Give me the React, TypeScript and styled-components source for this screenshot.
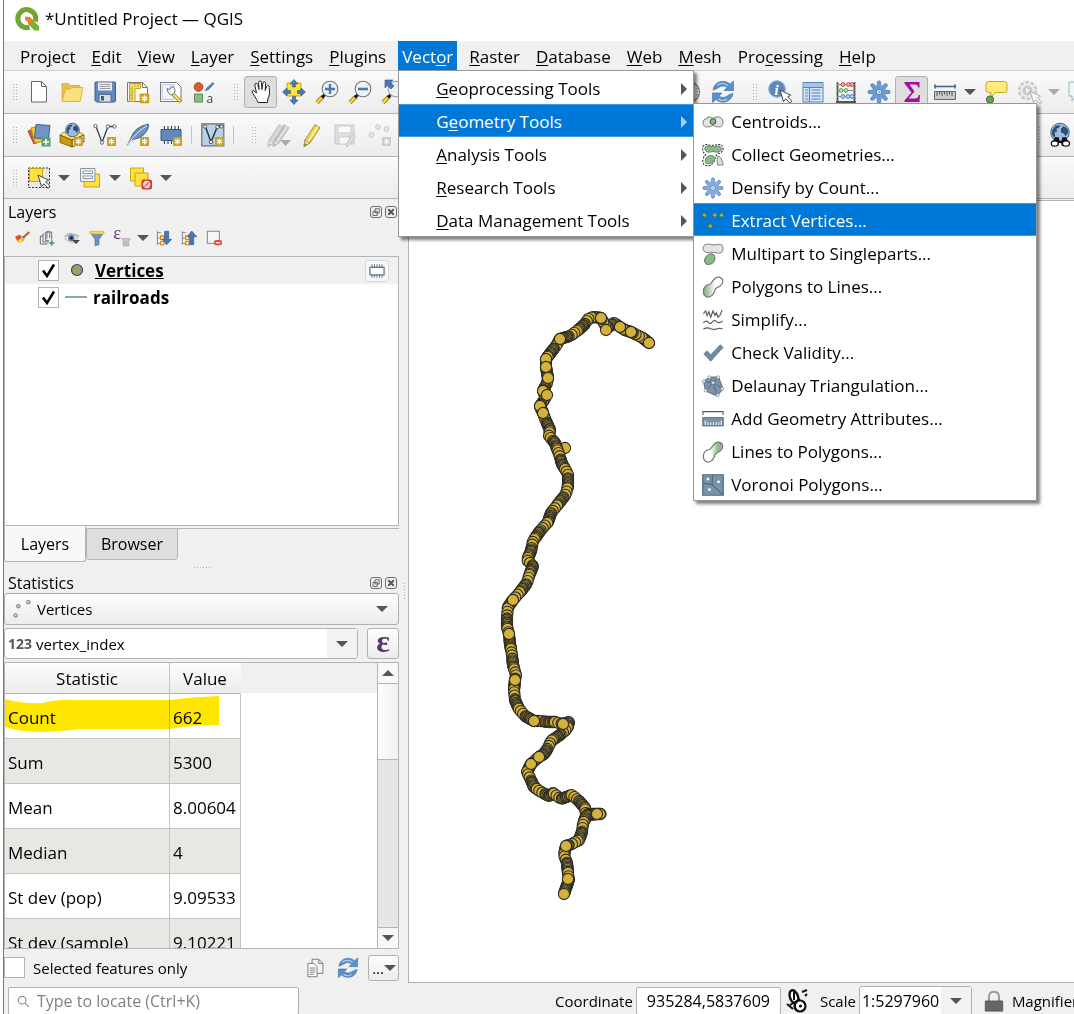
import React from 'react';
import styled, { createGlobalStyle, css } from 'styled-components';

const font = '"Open Sans", "Noto Sans", sans-serif';

const GlobalStyle = createGlobalStyle`
  *, *::before, *::after { box-sizing: border-box; }
  body { margin: 0; background: #fff; overflow: hidden; }
  button, input, select { font: inherit; color: inherit; margin: 0; }
  svg { display: block; flex: none; overflow: visible; }
`;

/* ---------- icons ---------- */

const Badge = ({ fill = '#c9a21a' }: { fill?: string }) => (
  <g>
    <rect x="14" y="14" width="9" height="9" rx="1" fill={fill} />
    <path d="M18.500 15.500v6M15.900 17l5.200 3M15.900 20l5.200-3" stroke="#fff" strokeWidth="1.200" />
  </g>
);

const Gear = ({ fill, stroke }: { fill: string; stroke: string }) => (
  <g>
    {[0, 45, 90, 135, 180, 225, 270, 315].map((a) => (
      <path key={a} d="M10 7L10.600 1.500Q12 .3 13.400 1.500L14 7z" fill={fill} stroke={stroke} strokeWidth=".8" transform={`rotate(${a} 12 12)`} />
    ))}
    <circle cx="12" cy="12" r="6.500" fill={fill} />
    <circle cx="12" cy="12" r="2.600" fill="#fff" stroke={stroke} />
    <circle cx="12" cy="12" r="1" fill={fill} />
  </g>
);

const Pencil = ({ body, dark, tip }: { body: string; dark: string; tip: string }) => (
  <g>
    <path d="M5 17L15 1.500l5 3.200L10 20l-6 3.500z" fill={body} stroke={dark} strokeWidth=".8" />
    <path d="M8 18.500L18 3.500" stroke="#fff" strokeOpacity=".6" strokeWidth="1.500" />
    <path d="M5 17l5 3-6 3.500z" fill={tip} stroke={dark} strokeWidth=".6" />
    <path d="M4.600 20.500l2.300 1.300L4 23.500z" fill={dark} />
  </g>
);

const Cursor = ({ x, y, stroke = '#444' }: { x: number; y: number; stroke?: string }) => (
  <path transform={`translate(${x} ${y})`} d="M0 0l3.500 11.500 2.300-2.700 4.200 4.400 2-2-4.400-4.200 3-1.800z" fill="#fff" stroke={stroke} strokeWidth="1" />
);

const Lens = ({ children, ring = '#6f7680' }: { children?: React.ReactNode; ring?: string }) => (
  <g>
    <path d="M2 22.500l6-6" stroke="#8a6d10" strokeWidth="4" />
    <path d="M2 22.500l5.500-5.500" stroke="#f4d03a" strokeWidth="2.600" />
    <path d="M7 17.500l3-3" stroke="#111" strokeWidth="3" />
    <circle cx="15" cy="9" r="7.800" fill="#eef1f5" stroke={ring} strokeWidth="1.100" />
    {children}
  </g>
);

const Refresh = () => (
  <g fill="#5b8fc9" stroke="#3d6fa8" strokeWidth=".6">
    <path d="M2 10C3 4 8 .5 14 1.500q3 .5 5 2.500L22.500 1v9.500H13l3.200-3.200Q11 4.500 7 8q-2 1.500-5 2z" />
    <path d="M22 13.500c-1 6-6 9.500-12 8.500q-3-.5-5-2.500L1.500 22.500V13H11l-3.200 3.200Q13 19 17 15.500q2-1.500 5-2z" />
    <path d="M6 5.500q5-4 11 0M7 19q5 3 9 0" stroke="#b8d3ee" fill="none" strokeWidth="1.200" />
  </g>
);

const Globe = ({ cx, cy, r }: { cx: number; cy: number; r: number }) => (
  <g>
    <circle cx={cx} cy={cy} r={r} fill="#9dbbdc" stroke="#2d4a6b" strokeWidth=".8" />
    <path transform={`translate(${cx} ${cy}) scale(${r / 10})`} d="M-8-3l3-4 5-1-1 3-3 1 1 3-3 1 1 4-2 1-2-4zM1-4l3-3 4 3 1 4-3 4-2-3-3-1z" fill="#2d4f78" />
  </g>
);

const GREEN = '#8cba86';
const BLUE = '#7a93a8';

const drawings: Record<string, React.ReactNode> = {
  newFile: <path d="M4.500 1.500h10l5 5v15.500h-15zM14.500 1.500v5h5" fill="#fff" stroke="#666" />,
  open: (
    <g stroke="#d9a83c" strokeWidth=".8">
      <path d="M2 21V3.500h6.500l1.500 2h10V21z" fill="#eebb4d" />
      <path d="M2 21.500L5.500 9h5l1.500-1.500h11L20 21.500z" fill="#fbe07e" />
    </g>
  ),
  save: (
    <g>
      <path d="M2.500 2h19a1 1 0 011 1v18l-1 1h-18l-1.500-1.500V3q0-1 .5-1z" fill="#5f88bb" stroke="#3f5f88" />
      <path d="M5 2.500h14v8H5z" fill="#eee" />
      <path d="M6.500 4.500h11M6.500 6.500h11M6.500 8.500h11" stroke="#888" strokeWidth=".8" />
      <path d="M6 14.500h12V22H6z" fill="#ddd" stroke="#3f5f88" strokeWidth=".8" />
      <path d="M8 16h3v4.500H8z" fill="#3f5f88" />
    </g>
  ),
  layout: (
    <g>
      <path d="M1.500 2.500h15l5 5v14h-20z" fill="#fff" stroke="#777" />
      <path d="M16.500 2.500v5h5" fill="none" stroke="#777" />
      <path d="M3.500 3.500h11v5h-5.500v13H3.500z" fill="#f6dc72" stroke="#c9a21a" />
      <path d="M6 6v14M9 4v3M12 4v3M4 9h3M4 12h3M4 15h3M4 18h3" stroke="#c9a21a" strokeWidth=".8" />
      <g transform="translate(-1.500 -1.500) scale(1.080)"><Badge /></g>
    </g>
  ),
  styleEdit: (
    <g>
      <path d="M1.500 2.500h16l4.500 4.500v14.500H1.500z" fill="#fff" stroke="#777" />
      <path d="M3 4.500h12v15H3z" fill="#f2f5fb" stroke="#9db2d6" strokeWidth=".7" />
      <path d="M14 14l8 8" stroke="#a4811a" strokeWidth="3.800" />
      <path d="M14 14l7.500 7.500" stroke="#f4d75a" strokeWidth="2.400" />
      <path d="M8 8.500l3 1 1-3q4 0 4 4l-.5 2.500-2.500 2Q9 15 8 8.500z" fill="#f4f4f4" stroke="#666" strokeWidth=".9" />
    </g>
  ),
  styleManager: (
    <g>
      <circle cx="6.500" cy="7" r="4.300" fill="#cf6030" stroke="#a5431b" />
      <path d="M13.500 10.500q1-3 3-4l4.500-4 1 1-4 4.500q-1 2-4.500 2.500z" fill="#5f88bb" stroke="#3f5f88" strokeWidth=".7" />
      <path d="M2.500 14h8v8h-8z" fill={GREEN} stroke="#5d8f58" />
      <text x="14.500" y="22.500" fontSize="12" fill="#444" fontFamily={font}>a</text>
    </g>
  ),
  hand: (
    <path d="M9 22.500q-1-3-3.500-6.500L3 12q0-1.800 2-1.300l2.500 2.500L5.800 5q0-1.800 1.500-1.700 1.200 0 1.500 1.200l1.200 5-.4-7q.2-1.600 1.500-1.500 1.200 0 1.400 1.500l.4 7 1-6.500q.5-1.500 1.700-1.200 1.200.2 1.100 1.700l-.5 7 1.500-4q.8-1.400 1.800-1 1 .5.700 1.800L20.500 13q0 3-1.700 6l-.3 3.500z" fill="#fff" stroke="#222" strokeWidth="1" />
  ),
  panSelection: (
    <g>
      <path d="M5 3h14v13H5z" fill="#fbe23c" stroke="#cda31a" />
      <path d="M12-.5l4 4.500h-2.500v3h-3V4H8zM12 24.500l4-4.500h-2.500v-3.500h-3V20H8zM.5 12L5 8v2.500h3.500v3H5V16zM23.500 12L19 8v2.500h-3.500v3H19V16z" fill="#4a78b0" stroke="#2d5488" strokeWidth=".6" />
    </g>
  ),
  zoomIn: <Lens><path d="M15 4v10M10 9h10" stroke="#4a78b0" strokeWidth="2.400" /></Lens>,
  zoomOut: <Lens><path d="M10 9h10" stroke="#4a78b0" strokeWidth="2.600" /></Lens>,
  zoomFull: (
    <g>
      <Lens ring="#9aa0a8" />
      <path d="M4 0h8L9.500 2.500 13 6l-3 3-3.500-3.500L4 8z" fill="#4a78b0" stroke="#2d5488" strokeWidth=".6" />
    </g>
  ),
  clock: (
    <g>
      <circle cx="12" cy="12" r="9.500" fill="#eee" stroke="#777" strokeWidth="1.300" />
      <path d="M19 8v8" stroke="#5f88bb" strokeWidth="1.500" strokeDasharray="1.500 1.500" />
    </g>
  ),
  refresh: <Refresh />,
  identify: (
    <g>
      <circle cx="9" cy="9" r="8.300" fill="#5d8bc0" stroke="#8db2da" />
      <text x="6.500" y="14.500" fontSize="15" fontStyle="italic" fontWeight="700" fill="#fff" fontFamily="Liberation Serif, serif">i</text>
      <Cursor x={12} y={10} />
    </g>
  ),
  table: (
    <g>
      <path d="M2 2.500h20v19.500H2z" fill="#d5e3f4" stroke="#4f83c0" />
      <path d="M2.500 3h19v4h-19z" fill="#a7c4e6" />
      <path d="M2 7.500h20M8.500 7v15M4 10h3M4 13h3M4 16h3M4 19h3M10.500 10h9M10.500 13h9M10.500 16h9M10.500 19h9" stroke="#4f83c0" strokeWidth="1.100" />
    </g>
  ),
  abacus: (
    <g fill="none">
      <path d="M3.500 2v19M20.500 2v19M2 22h20" stroke="#555" strokeWidth="1.800" />
      <path d="M3 4.500h18M3 10.500h18M3 16.500h18" stroke="#888" />
      <g stroke="#c94040" fill="#f4b0b0"><circle cx="9" cy="4.500" r="1.900" /><circle cx="14.500" cy="4.500" r="1.900" /><circle cx="18" cy="4.500" r="1.900" /></g>
      <g stroke="#5aa050" fill="#bde0b8"><circle cx="7" cy="10.500" r="1.900" /><circle cx="12" cy="10.500" r="1.900" /></g>
      <g stroke="#4f83c0" fill="#bcd4f0"><circle cx="9" cy="16.500" r="1.900" /><circle cx="14" cy="16.500" r="1.900" /><circle cx="18" cy="16.500" r="1.900" /></g>
    </g>
  ),
  gear: <Gear fill="#6d9bd6" stroke="#4a78b0" />,
  densify: <Gear fill="#86abdc" stroke="#4f7fbe" />,
  sigma: <path d="M4.500 2h15v5.500h-1.300q-.5-3-3-3H9.500l5 7-6 7h6.500q3 0 3.700-3.500H20L19.500 22h-15v-1.500l7-8-7-9z" fill="#a3109f" />,
  ruler: (
    <g>
      <path d="M2 6.500h20M2 4.500v4M22 4.500v4" stroke="#3d5f8c" strokeWidth="1.600" />
      <path d="M1.500 11.500h21v8h-21z" fill="#ccc" stroke="#666" />
      <path d="M4 12v4M6.500 12v2.500M9 12v4M11.500 12v2.500M14 12v4M16.500 12v2.500M19 12v4" stroke="#555" />
    </g>
  ),
  mapTips: (
    <g>
      <path d="M4.500 1.500h16q2.500 0 2.500 2.500v6q0 2.500-2.500 2.500H11l-4.500 6 .5-6H4.500Q2 12.500 2 10V4q0-2.500 2.500-2.500z" fill="#fbec7c" stroke="#cda31a" />
      <circle cx="6" cy="19.500" r="3.600" fill="#64a35c" stroke="#3d6b38" />
    </g>
  ),
  action: (
    <g opacity=".4">
      <circle cx="10.500" cy="10.500" r="8.500" fill="#ddd" stroke="#888" strokeWidth="2.500" strokeDasharray="3.400 2" />
      <circle cx="10.500" cy="10.500" r="4.800" fill="#888" />
      <path d="M9 8l4 2.500L9 13z" fill="#fff" />
      <Cursor x={13} y={11} />
    </g>
  ),
  bubble: <path d="M1 2h22v14H8l-4 5v-5H1z" fill="#eef6f8" stroke="#9bb5bd" />,
  dataSource: (
    <g>
      <path d="M1 8l8-3 5 13-7 3z" fill="#cf6030" stroke="#a5431b" />
      <path d="M4 5l9-2 3 15-8 2z" fill="#f0cc3a" stroke="#b8921a" />
      <path d="M9 1.500l14 1-1.500 13.500-14-1z" fill="#6d95c8" stroke="#3f5f88" />
      <path d="M14.500 14.500h9v9h-9z" fill="#5a9f6c" /><path d="M19 16v6M16 19h6" stroke="#fff" strokeWidth="1.600" />
    </g>
  ),
  geopackage: (
    <g>
      <path d="M0 12l4-3 8 4 7-4 5 3-12 5z" fill="#fbe576" stroke="#5c470a" strokeWidth=".6" />
      <Globe cx={12.500} cy={7} r={6.800} />
      <path d="M12 17l12-5v7l-12 5z" fill="#f9df4a" stroke="#5c470a" strokeWidth=".8" />
      <path d="M12 17v7L0 19.500V12z" fill="#c79a11" stroke="#5c470a" strokeWidth=".7" />
      <Badge />
    </g>
  ),
  shapefile: (
    <g>
      <path d="M3 3.500L9 19.500 15 3.500h7" fill="none" stroke="#333d4d" strokeWidth="1.300" />
      <g fill="#fff" stroke="#555" strokeWidth=".9"><circle cx="2.500" cy="3" r="1.700" /><circle cx="9" cy="19.500" r="1.700" /><circle cx="15" cy="3.500" r="1.700" /><circle cx="21.500" cy="3.500" r="1.700" /></g>
      <Badge />
    </g>
  ),
  feather: (
    <g>
      <path d="M1 23L5 15Q8 4 22.500 1 23 9 14 14.500L5 17z" fill="#6a93c4" stroke="#2f4f7a" strokeWidth=".8" />
      <path d="M1 23Q8 11 21 2.500" fill="none" stroke="#dce8f5" />
      <Badge />
    </g>
  ),
  chip: (
    <g>
      <path d="M5.500 3v18M9 3v18M12.500 3v18M16 3v18M19.500 3v18" stroke="#333f52" strokeWidth="1.100" />
      <path d="M2 6.500h20v11H2z" fill="#5f88bb" stroke="#3b5a82" />
      <Badge />
    </g>
  ),
  virtual: (
    <g>
      <path d="M.8 .8h22v22H.8z" fill="#bcd0e6" stroke="#5a6f8a" strokeWidth="1.200" />
      <path d="M4.500 4L10 19l6-14.500 3.500-2" fill="none" stroke="#2c3645" strokeWidth="1.500" />
      <g fill="#fff" stroke="#444" strokeWidth=".9"><circle cx="4" cy="3.500" r="1.700" /><circle cx="10" cy="19" r="1.700" /><circle cx="16.500" cy="4" r="1.700" /><circle cx="20.500" cy="3.500" r="1.500" /></g>
      <Badge />
    </g>
  ),
  editsOff: (
    <g>
      <g opacity=".6" transform="translate(-3 0)"><Pencil body="#bbb" dark="#999" tip="#ddd" /></g>
      <g opacity=".7" transform="translate(2 0)"><Pencil body="#bbb" dark="#999" tip="#ddd" /></g>
      <path d="M13 17h11l-5.500 6z" fill="#aaa" />
    </g>
  ),
  pencil: <Pencil body="#f1d43a" dark="#8c7a3a" tip="#e9dcc0" />,
  saveOff: (
    <g opacity=".5">
      <path d="M2 2h19v19H2z" fill="#ccc" stroke="#999" />
      <path d="M5 3h13v7H5z" fill="#fff" stroke="#aaa" /><path d="M6 14h11v7H6z" fill="#fff" stroke="#aaa" />
      <g transform="translate(11 10) scale(.58)"><Pencil body="#bbb" dark="#888" tip="#ddd" /></g>
    </g>
  ),
  pointsOff: (
    <g opacity=".6" transform="translate(2 0)">
      <g fill="#ddd" stroke="#aaa"><circle cx="3.500" cy="12" r="2.400" /><circle cx="10" cy="4" r="2.400" /><circle cx="18.500" cy="6" r="2.400" /></g>
      <Badge fill="#b8b59f" />
    </g>
  ),
  webSearch: (
    <g>
      <Globe cx={12} cy={9.500} r={9.300} />
      <path d="M4 20l3-6 4 .5v3h3v-3l4-.5 3 6-3 3h-4l-1-3h-2l-1 3H7z" fill="#111" />
      <g fill="#fff" stroke="#111" strokeWidth="1.200"><ellipse cx="6.800" cy="20.500" rx="3.500" ry="2.600" /><ellipse cx="18" cy="20.500" rx="3.500" ry="2.600" /></g>
    </g>
  ),
  select: (
    <g>
      <path d="M1.500 2h21v19.500h-21z" fill="#e8e8e8" stroke="#333" strokeDasharray="2 1.500" />
      <path d="M2.500 2.500h13v13h-13z" fill="#fbe23c" stroke="#cda31a" />
      <Cursor x={11} y={9} />
    </g>
  ),
  selectForm: (
    <g>
      <path d="M6 8h15.500v13H6z" fill="#fbe23c" stroke="#cda31a" />
      <path d="M2.500 2.500h14.500v13H2.500z" fill="#eef0f2" stroke="#8c98a4" />
      <path d="M5 5h9.500v2.500H5zM5 10h9.500v2.500H5z" fill="#fff" stroke="#8c98a4" />
    </g>
  ),
  deselect: (
    <g>
      <path d="M1.500 2h13v13h-13z" fill="#fbe23c" stroke="#cda31a" />
      <path d="M6 7h13v13H6z" fill="#fbe23c" stroke="#cda31a" />
      <rect x="12.500" y="13.500" width="10.500" height="10" rx="2" fill="#d63b3b" />
      <circle cx="17.700" cy="18.500" r="3.200" fill="#f4c6c6" stroke="#fff" /><path d="M15.500 21l4.500-5" stroke="#c33" />
    </g>
  ),
  brush: (
    <g>
      <path d="M2 10l7-3 6 7-5 6q-7-2-8-10z" fill="#f0a030" />
      <path d="M2 10l6-3 4 4-7 5z" fill="#e5483a" /><path d="M9 20l6-6-4-3-5 6z" fill="#fbd93a" />
      <path d="M10 12l3-3 3 3-2 4z" fill="#d8d8d8" stroke="#777" strokeWidth=".8" />
      <path d="M14 11l8-7" stroke="#b3712c" strokeWidth="3.500" strokeLinecap="round" />
    </g>
  ),
  addGroup: (
    <g fill="none" stroke="#666" strokeWidth="1.400">
      <path d="M6 9H2v12h11M8 6H6v12h9M10 3h9v12M10 3v13h5" /><path d="M12 13V3q2-2.500 4 0v9" stroke="#4a78b0" />
      <path d="M14 18h3v-3h4v3h3v3h-3v3h-4v-3h-3z" fill="#5a9f6c" stroke="#fff" strokeWidth=".8" />
    </g>
  ),
  eye: (
    <g>
      <path d="M1 12Q8 3 21 10L17 18Q7 20 1 12z" fill="#eee" stroke="#999" />
      <path d="M1 10Q9 1 22 9" fill="none" stroke="#aaa" strokeWidth="1.600" />
      <circle cx="11" cy="12" r="5" fill="#5b84b5" /><circle cx="11" cy="12" r="2.400" fill="#222" />
      <path d="M12 15h12l-6 6z" fill="#444" />
    </g>
  ),
  filter: (
    <g>
      <path d="M2 4h20l-7 10v8l-6 1.500V14z" fill="#6a93c4" stroke="#46699a" />
      <path d="M1.500 2h21v4h-21z" fill="#f6dc3a" stroke="#cda31a" strokeWidth=".8" />
    </g>
  ),
  expressionFilter: (
    <g>
      <text x="-1" y="14" fontSize="28" fill="#6b3f78" fontFamily="Liberation Serif, serif">ε</text>
      <path d="M12 13h12l-2 4v7h-3v-7h-2v7h-3v-7z" fill="#ccc" stroke="#999" />
    </g>
  ),
  expand: (
    <g>
      <path d="M2 2v20M2 4h5M2 12h5M2 20h5" stroke="#777" strokeWidth="1.300" fill="none" />
      <g fill="#fff" stroke="#e08a1c" strokeWidth="2"><path d="M7 9h5v5H7zM7 17h5v5H7z" /></g>
      <path d="M13 2h6v12h4.500L16 22l-6.500-8H13z" fill="#4a78b0" stroke="#2d5488" />
    </g>
  ),
  collapse: (
    <g>
      <path d="M2 2v20M2 4h5M2 12h5M2 20h5" stroke="#777" strokeWidth="1.300" fill="none" />
      <g fill="#fff" stroke="#e08a1c" strokeWidth="2"><path d="M7 9h5v5H7zM7 17h5v5H7z" /></g>
      <path d="M13 22h6V10h4.500L16 1.500 9.500 10H13z" fill="#4a78b0" stroke="#2d5488" />
    </g>
  ),
  removeLayer: (
    <g>
      <path d="M2 2h18v18H2z" fill="#f6f6f6" stroke="#888" strokeWidth="1.600" />
      <rect x="12" y="15" width="12" height="8" rx="3" fill="#e5483a" /><path d="M14.500 19h7" stroke="#fff" strokeWidth="2" />
    </g>
  ),
  float: (
    <g fill="none" stroke="#555" strokeWidth="1.700">
      <rect x="1" y="1" width="22" height="22" rx="5" />
      <path d="M10 5.500h8.500v8.500h-8.500zM6 10.500h8.500v8.500H6z" />
    </g>
  ),
  close: (
    <g fill="none" stroke="#555" strokeWidth="1.700">
      <rect x="1" y="1" width="22" height="22" rx="5" />
      <path d="M6.500 6.500l11 11M17.500 6.500l-11 11" strokeWidth="4" />
    </g>
  ),
  memory: (
    <g>
      <path d="M6 4v16M9 4v16M12 4v16M15 4v16M18 4v16" stroke="#5d7388" strokeWidth="1.200" />
      <path d="M3.500 7.500h17v9h-17z" fill="#fff" stroke="#5d7388" strokeWidth="1.500" />
    </g>
  ),
  points: (
    <g fill="#ddd" stroke="#888" strokeWidth="1.300"><circle cx="5" cy="19" r="1.800" /><circle cx="8" cy="9" r="1.800" /><circle cx="19" cy="4.500" r="1.800" /></g>
  ),
  copy: (
    <g stroke="#666">
      <path d="M8.500 1.500h8l5 5v12h-13zM16.500 1.500v5h5" fill="#f4f4f4" />
      <path d="M3.500 6.500h7l4 4v12h-11zM5.500 12h7M5.500 14.500h7M5.500 17h7M5.500 19.500h5" fill="#fff" />
    </g>
  ),
  search: (
    <g fill="none" stroke="#8a8a8a" strokeWidth="2"><circle cx="9.500" cy="9.500" r="7" /><path d="M15 15l7 7" /></g>
  ),
  extents: (
    <g>
      <ellipse cx="9" cy="8" rx="4" ry="7" transform="rotate(-20 9 8)" fill="#fff" stroke="#111" strokeWidth="2.400" />
      <path d="M9 2v9M5 16l10-6M2 15l6 5M17 3l5-2M20 7l2-2" stroke="#111" strokeWidth="2" />
      <circle cx="15" cy="17" r="5.500" fill="#fff" stroke="#111" strokeWidth="2.200" />
      <circle cx="15.500" cy="17" r="1.600" fill="#111" /><path d="M12 12q-3 4-1 8" stroke="#111" strokeWidth="1.500" fill="none" />
    </g>
  ),
  lock: (
    <g>
      <path d="M6.500 12V8q0-6 5.500-6t5.500 6v4" fill="none" stroke="#999" strokeWidth="2.200" />
      <path d="M2.500 12h19v11h-19z" fill="#666" stroke="#555" />
    </g>
  ),
  centroids: (
    <g>
      <path d="M6 6.500Q9 6 12 8q3-2 7-1.500 4 1.500 4 5.500 0 5.500-5 5.500-3 0-6-2-3 2-6 2-5 0-5-5.500 0-3 5-4z" fill="#e3e3e3" stroke="#777" />
      <circle cx="12" cy="11.500" r="3" fill={GREEN} stroke="#456b42" strokeWidth="1.200" />
    </g>
  ),
  collect: (
    <g>
      <path d="M1 3Q3-.5 8 1q5 1 9-.5 5-.5 6 4 0 5-5 6-2 1-3 3l-2 6q-3 5-8 4-5-1-4-7 1-3 3-5-4-3-3-7z" fill="#fff" stroke="#222" strokeDasharray="2.200 1.300" strokeWidth="1.100" />
      <path d="M3 4q2-3 5-1.500 5 1 8 0 5-1 5 3 0 3.500-5 3.500-4-2-8 0-5 0-5-5z" fill={GREEN} stroke="#5f7f5c" />
      <ellipse cx="8.500" cy="17" rx="5.500" ry="4" transform="rotate(-35 8.500 17)" fill={GREEN} stroke="#5f7f5c" />
      <path d="M17 14q2-2 4 2 2 5 2 7h-6q-1-6 0-9z" fill="#ddd" stroke="#777" />
    </g>
  ),
  extract: (
    <g>
      <path d="M3 6l6 11 5-11h7" fill="none" stroke="#3f6e9d" />
      <g fill={GREEN} stroke="#4b6f52" strokeWidth="1.100"><circle cx="2.600" cy="5.500" r="2.300" /><circle cx="14" cy="5.500" r="2.300" /><circle cx="21.400" cy="5.500" r="2.300" /><circle cx="9" cy="17.500" r="2.300" /></g>
    </g>
  ),
  multipart: (
    <g>
      <path d="M1 5q1-4 6-4 5 2 10 .5 6-1 6 4.500 0 6-6 5-5-1.500-9-.5-7 .5-7-5.500z" fill="#e3e3e3" stroke="#777" />
      <path d="M7 12.500q5-2 7 2 1 9-8 9-4-1-3-6 1-3 4-5z" fill={GREEN} stroke="#4b6f52" />
    </g>
  ),
  polyToLine: (
    <g>
      <defs><linearGradient id="ptl"><stop offset="0.100" stopColor={GREEN} /><stop offset=".6" stopColor="#fff" /></linearGradient></defs>
      <path d="M1.500 17q0-7 7-8 2-1 3.500-4 3-4.500 7.500-3.500 4.500 2 2.500 7-2 3.500-5.500 4-2.500 1-3 5-3 6-7.500 5.500-4.500-1-4.500-6z" fill="url(#ptl)" stroke="#777" strokeWidth="1.300" />
    </g>
  ),
  lineToPoly: (
    <g>
      <defs><linearGradient id="ltp"><stop offset=".4" stopColor="#fff" /><stop offset=".75" stopColor={GREEN} /></linearGradient></defs>
      <path d="M1.500 17q0-7 7-8 2-1 3.500-4 3-4.500 7.500-3.500 4.500 2 2.500 7-2 3.500-5.500 4-2.500 1-3 5-3 6-7.500 5.500-4.500-1-4.500-6z" fill="url(#ltp)" stroke="#777" strokeWidth="1.300" />
    </g>
  ),
  simplify: (
    <g fill="none" stroke="#555" strokeWidth="1.200">
      <path d="M1.500 5l2.500-3 1.500 5 2-4 2 6 2.500-7 2 5 1.500-3 2 5 2-2 2.500-6" />
      <path d="M1.500 15q3-3 5-1 2 3 4 1 3-4 5-1.500 3 3 7-.5M1.500 22q4-2.500 8-.5 4 1.500 7 0 3-1 6 0" />
    </g>
  ),
  check: <path d="M2 13l3.500-3.500 4 4.500L20 3l3 3L9.500 21z" fill="#6f8ba1" stroke="#5d7388" strokeWidth=".8" />,
  delaunay: (
    <g>
      <path d="M1.500 7L8 2.500 18 2l5 13-6.500 8L4 17.500z" fill={BLUE} stroke="#4e6980" />
      <path d="M12 9L1.500 7M12 9L8 2.500M12 9l6-7M12 9l11 6M12 9l4.500 14M12 9l-8 8.500" stroke="#4e6980" />
      <g fill="#fff" stroke="#888" strokeWidth=".9"><circle cx="2" cy="7" r="1.600" /><circle cx="8" cy="2.500" r="1.600" /><circle cx="17.500" cy="2.500" r="1.600" /><circle cx="22" cy="15" r="1.600" /><circle cx="17" cy="22" r="1.600" /><circle cx="4" cy="17" r="1.600" /><circle cx="12" cy="8.500" r="1.600" /></g>
    </g>
  ),
  addGeom: (
    <g>
      <path d="M1 7.500V4h22v3.500" fill="none" stroke="#555" strokeWidth="1.200" />
      <path d="M.8 10.500h22.400v9H.8z" fill={BLUE} stroke="#4e6980" />
      <path d="M3.500 18.500v-5M6.500 18.500v-3M9.500 18.500v-3M12.500 18.500v-3M15.500 18.500v-3M18.500 18.500v-3M21 18.500v-5" stroke="#fff" strokeWidth="1.100" />
    </g>
  ),
  voronoi: (
    <g>
      <path d="M.8 .8h22.400v22.400H.8z" fill={BLUE} stroke="#4e6980" strokeWidth="1.300" />
      <path d="M1 10l10 1.500L11.500 1M11 11.500L23 23" fill="none" stroke="#4e6980" strokeWidth="1.200" />
      <g fill="#fff"><circle cx="6.500" cy="5.500" r="1.500" /><circle cx="18" cy="8.500" r="1.500" /><circle cx="8" cy="17" r="1.500" /></g>
    </g>
  ),
};

const Icon = ({ name, size = 24 }: { name: string; size?: number }) => (
  <svg width={size} height={size} viewBox="0 0 24 24" fill="none" aria-hidden="true">{drawings[name]}</svg>
);

const Logo = () => (
  <svg width="24" height="24" viewBox="0 0 24 24" aria-hidden="true">
    <path d="M14.500 20.200A9 9 0 1 1 20.300 14.500" fill="none" stroke="#6fa62f" strokeWidth="5" />
    <path d="M13 12.500l4.500.2L24 19v4.500h-4.500L13 17z" fill="#79b22f" />
    <path d="M10 9.500l5 .5 3.500 3.500-1.500 3-2.500-.2L10 13z" fill="#ee7f22" />
  </svg>
);

const Down = ({ color = '#555' }: { color?: string }) => (
  <svg width="12" height="6" viewBox="0 0 12 6" aria-hidden="true"><path d="M0 0h12L6 6z" fill={color} /></svg>
);
const Up = () => (
  <svg width="12" height="6" viewBox="0 0 12 6" aria-hidden="true"><path d="M0 6h12L6 0z" fill="#555" /></svg>
);
const Right = ({ color }: { color: string }) => (
  <svg width="6" height="12" viewBox="0 0 6 12" aria-hidden="true"><path d="M0 0v12l6-6z" fill={color} /></svg>
);

/* ---------- frame ---------- */

const Frame = styled.div`
  height: 100vh;
  margin-left: 3px;
  border-left: 1px solid #777;
  display: flex;
  flex-direction: column;
  background: #f0f0f0;
  color: #000;
  font: 17px/24px ${font};
  white-space: nowrap;
`;

const TitleBar = styled.header`
  display: flex;
  align-items: center;
  gap: 6px;
  height: 41px;
  padding: 0 0 4px 11px;
  background: #fff;
  h1 { margin: 0; font-size: 17px; font-weight: 400; }
`;

const MenuBar = styled.nav`
  display: flex;
  gap: 8px;
  height: 30px;
  padding-left: 12px;
  border-bottom: 1px solid #d0d0d0;
`;

const MenuSlot = styled.div`
  position: relative;
  display: flex;
`;

const MenuTitle = styled.button<{ $open?: boolean }>`
  height: 30px;
  padding: 2px 4px 0;
  border: 0;
  background: ${(p) => (p.$open ? '#0078d7' : 'transparent')};
  color: ${(p) => (p.$open ? '#fff' : '#000')};
`;

const Key = styled.u`
  text-decoration-thickness: 1px;
  text-underline-offset: 2px;
`;

const menuBox = css`
  position: absolute;
  z-index: 5;
  background: #fff;
  border: 1px solid #979797;
  box-shadow: 3px 3px 3px rgba(0, 0, 0, 0.5);
`;

const Menu = styled.div`
  ${menuBox}
  top: 29px;
  left: 0;
  width: 296px;
`;

const SubMenu = styled.div`
  ${menuBox}
  top: -1px;
  left: 100%;
  width: 344px;
`;

const MenuRow = styled.div`
  position: relative;
`;

const MenuItem = styled.button<{ $active?: boolean; $sub?: boolean }>`
  display: flex;
  align-items: center;
  gap: 7px;
  width: 100%;
  height: 33px;
  padding: 2px 6px 0 ${(p) => (p.$sub ? 8 : 37)}px;
  border: 0;
  background: ${(p) => (p.$active ? '#0078d7' : 'transparent')};
  box-shadow: ${(p) => (p.$active ? 'inset 0 1px #3c9ae8, inset 0 -1px #3c9ae8' : 'none')};
  color: ${(p) => (p.$active ? '#fff' : '#000')};
  text-align: left;
  span { flex: 1; }
`;

const Toolbar = styled.div<{ $last?: boolean }>`
  display: flex;
  align-items: center;
  flex: none;
  height: ${(p) => (p.$last ? 42 : 43)}px;
  overflow: hidden;
  background: linear-gradient(#fafafa, #ececec);
  border-bottom: 1px solid #b4b4b4;
`;

const ToolButton = styled.button<{ $pressed?: boolean; $edge?: boolean }>`
  display: flex;
  flex: none;
  align-items: center;
  justify-content: center;
  width: ${(p) => (p.$edge ? 28 : 33)}px;
  height: 32px;
  padding: 0;
  border: 1px solid ${(p) => (p.$pressed ? '#b0b0b0' : 'transparent')};
  border-radius: 3px;
  background: ${(p) => (p.$pressed ? '#dedede' : 'transparent')};
`;

const DropButton = styled.button`
  display: flex;
  flex: none;
  align-items: center;
  justify-content: center;
  width: 18px;
  height: 32px;
  padding: 0;
  border: 0;
  background: none;
`;

const Grip = styled.i<{ $first?: boolean }>`
  flex: none;
  width: 6px;
  height: 18px;
  margin: ${(p) => (p.$first ? '0 4px 0 8px' : '0 5px 0 13px')};
  background: radial-gradient(circle, #b0b0b0 32%, transparent 40%) 0 0 / 3px 3px;
`;

const Divider = styled.i`
  flex: none;
  width: 1px;
  height: 18px;
  margin: 0 4px;
  background: #c4c4c4;
`;

const Gap = styled.i<{ $w?: number }>`
  flex: ${(p) => (p.$w ? `0 0 ${p.$w}px` : '1')};
`;

const Work = styled.main`
  display: flex;
  flex: 1;
  min-height: 0;
`;

/* ---------- docks ---------- */

const Docks = styled.div`
  display: flex;
  flex-direction: column;
  flex: none;
  width: 395px;
`;

const DockTitle = styled.div<{ $tight?: boolean }>`
  display: flex;
  flex: none;
  align-items: center;
  gap: 3px;
  height: ${(p) => (p.$tight ? 21 : 27)}px;
  padding: 0 2px ${(p) => (p.$tight ? 0 : 2)}px 4px;
  font-size: 16px;
  h2 { flex: 1; margin: 0; font-size: inherit; font-weight: 400; }
`;

const DockButton = styled.button`
  padding: 0;
  border: 0;
  background: none;
`;

const LayerTools = styled.div`
  display: flex;
  flex: none;
  height: 30px;
  padding: 3px 0 0 5px;
`;

const SmallTool = styled.button<{ $slim?: boolean }>`
  display: flex;
  align-items: center;
  justify-content: center;
  width: ${(p) => (p.$slim ? 17 : 25)}px;
  height: 17px;
  padding: 0;
  border: 0;
  background: none;
`;

const Tree = styled.ul`
  flex: 270 1 0;
  min-height: 0;
  margin: 0;
  padding: 0;
  list-style: none;
  background: #fff;
  border: 1px solid #b4b4b4;
`;

const TreeRow = styled.li<{ $current?: boolean }>`
  display: flex;
  align-items: center;
  height: 27px;
  padding: 0 9px 0 33px;
  background: ${(p) => (p.$current ? '#f0f0f0' : '#fff')};
  font-weight: 700;
  label {
    flex: 1;
    display: flex;
    align-items: center;
    gap: 6px;
    text-decoration: ${(p) => (p.$current ? 'underline' : 'none')};
  }
`;

const CheckBox = styled.input`
  appearance: none;
  flex: none;
  width: 21px;
  height: 21px;
  border: 1px solid #b4b4b4;
  background: #fff;
  &:checked {
    background: #fff url("data:image/svg+xml,%3Csvg xmlns='http://www.w3.org/2000/svg' viewBox='0 0 19 19'%3E%3Cpath d='M4 9.500l4 5.500L15 3.500' fill='none' stroke='%23000' stroke-width='2.500'/%3E%3C/svg%3E") center / 19px 19px;
  }
`;

const Temporary = styled.button`
  padding: 0 1px;
  border: 1px solid #d8d8d8;
  border-radius: 3px;
  background: #f8f8f8;
`;

const Tabs = styled.div`
  display: flex;
  flex: none;
  height: 36px;
  font-size: 16px;
`;

const Tab = styled.button<{ $active?: boolean; $w: number }>`
  width: ${(p) => p.$w}px;
  height: ${(p) => (p.$active ? 36 : 32)}px;
  margin-top: ${(p) => (p.$active ? 0 : 2)}px;
  padding: 0;
  border: 1px solid #b4b4b4;
  border-top-color: ${(p) => (p.$active ? 'transparent' : '#b4b4b4')};
  border-radius: 0 0 3px 3px;
  background: ${(p) => (p.$active ? '#f8f8f8' : '#dedede')};
`;

const TabRail = styled.i`
  flex: 1;
  margin-top: 2px;
  border-top: 1px solid #b4b4b4;
`;

const HSplit = styled.i`
  flex: none;
  align-self: center;
  width: 18px;
  height: 10px;
  background: radial-gradient(circle, #b0b0b0 32%, transparent 40%) 0 4px / 3px 3px repeat-x;
`;

const VSplit = styled.i`
  flex: none;
  align-self: center;
  width: 9px;
  height: 18px;
  background: radial-gradient(circle, #b0b0b0 32%, transparent 40%) 4px 0 / 3px 3px repeat-y;
`;

const raised = css`
  border: 1px solid #b0b0b0;
  border-radius: 3px;
  background: linear-gradient(#fdfdfd, #ececec);
`;

const LayerPicker = styled.div`
  ${raised}
  display: flex;
  flex: none;
  align-items: center;
  height: 32px;
  padding: 0 10px 0 6px;
  font-size: 15px;
  select {
    flex: 1;
    padding: 0 0 0 4px;
    border: 0;
    background: none;
    appearance: none;
  }
`;

const FieldRow = styled.div`
  display: flex;
  flex: none;
  gap: 9px;
  height: 31px;
  margin: 3px 0;
`;

const Combo = styled.div<{ $status?: boolean }>`
  display: flex;
  flex: ${(p) => (p.$status ? '0 0 113px' : '1')};
  align-items: center;
  min-width: 0;
  height: 31px;
  border: 1px solid #b0b0b0;
  border-radius: 3px;
  background: #fff;
  font-size: ${(p) => (p.$status ? 16 : 15)}px;
  b { padding-left: 3px; font-size: 14px; color: #555; }
  input {
    flex: 1;
    min-width: 0;
    padding: 0 0 0 ${(p) => (p.$status ? 2 : 4)}px;
    border: 0;
    background: none;
  }
  button {
    align-self: stretch;
    width: 30px;
    padding: 0;
    border: 0;
    background: #f2f2f2;
    display: flex;
    align-items: center;
    justify-content: center;
  }
`;

const SquareButton = styled.button`
  ${raised}
  display: flex;
  align-items: center;
  justify-content: center;
  width: 32px;
  padding: 0;
`;

const Epsilon = styled.span`
  font: 700 32px/24px "Liberation Serif", serif;
  padding-bottom: 6px;
  color: #5d3668;
`;

const StatsBox = styled.div`
  flex: 287 1 0;
  display: flex;
  min-height: 0;
  background: #fff;
  border: 1px solid #b4b4b4;
`;

const StatsView = styled.div`
  position: relative;
  flex: 1;
  overflow: hidden;
  background: linear-gradient(#f0f0f0 30px, #fff 30px);
`;

const Marker = styled.svg`
  position: absolute;
  top: 32px;
  left: 0;
  mix-blend-mode: multiply;
`;

const StatsTable = styled.table`
  border-collapse: separate;
  border-spacing: 0;
  th {
    height: 31px;
    padding: 1px 0 0;
    font-weight: 400;
    background: linear-gradient(#fdfdfd, #ececec);
    border-right: 1px solid #c4c4c4;
    border-bottom: 1px solid #b4b4b4;
  }
  th:last-child { border-right-color: transparent; }
  td {
    height: 45px;
    padding: 3px 0 0 3px;
    border-right: 1px solid #c4c4c4;
    border-bottom: 1px solid #c4c4c4;
    font-size: 17px;
  }
  tr:nth-child(even) td { background: #e9e7e3; }
  th:first-child { width: 165px; }
  th:last-child { width: 71px; }
`;

const Scroll = styled.div`
  display: flex;
  flex-direction: column;
  width: 21px;
  border-left: 1px solid #b4b4b4;
  background: #e6e6e6;
  button {
    display: flex;
    align-items: center;
    justify-content: center;
    height: 21px;
    padding: 0;
    border: 0;
    background: #f8f8f8;
  }
  button:first-child { border-bottom: 1px solid #b4b4b4; }
  button:last-child { border-top: 1px solid #b4b4b4; margin-top: auto; }
`;

const Thumb = styled.i`
  flex: 0 0 76px;
  background: linear-gradient(90deg, #fdfdfd, #f0f0f0);
  border-bottom: 1px solid #b4b4b4;
`;

const StatsFooter = styled.div`
  display: flex;
  flex: none;
  align-items: center;
  gap: 4px;
  height: 34px;
  padding-top: 3px;
  font-size: 15px;
  label { display: flex; align-items: center; gap: 8px; flex: 1; }
`;

const MoreButton = styled.button`
  ${raised}
  display: flex;
  align-items: center;
  justify-content: flex-end;
  width: 31px;
  height: 26px;
  padding: 0 2px 0 0;
  font-size: 15px;
`;

/* ---------- canvas and status ---------- */

const Canvas = styled.section`
  flex: 1;
  margin-top: 1px;
  overflow: hidden;
  background: #fff;
  border: 1px solid #b4b4b4;
  border-right: 0;
`;

const Status = styled.footer`
  display: flex;
  align-items: center;
  flex: none;
  height: 31px;
  padding: 5px 0 0 4px;
  overflow: hidden;
  font-size: 15px;
`;

const Locator = styled.div`
  display: flex;
  align-items: center;
  flex: none;
  width: 291px;
  height: 28px;
  padding-left: 8px;
  border: 1px solid #b0b0b0;
  border-radius: 2px;
  background: #fff;
  font-size: 16px;
  input {
    flex: 1;
    min-width: 0;
    padding: 0 0 0 7px;
    border: 0;
    background: none;
    &::placeholder { color: #808080; }
  }
`;

const StatusGroup = styled.div`
  display: flex;
  align-items: center;
  flex: none;
  gap: 3px;
  margin-left: 256px;
`;

const CoordinateBox = styled.input`
  width: 145px;
  height: 28px;
  padding: 0;
  border: 1px solid #b0b0b0;
  border-radius: 2px;
  background: #fff;
  font-size: 16px;
  text-align: center;
`;

const StatusButton = styled.button`
  padding: 0;
  border: 0;
  background: none;
  margin: 0 8px 0 1px;
`;

const LockButton = styled(StatusButton)`
  margin-left: 8px;
  margin-right: 4px;
`;

/* ---------- data ---------- */

const track: [number, number][] = [
  [649, 343], [643, 338], [637, 335], [631, 332], [625, 330], [620, 327], [614, 323], [607, 328], [601, 318], [595, 317],
  [589, 318], [584, 325], [577, 331], [570, 336], [560, 339], [556, 346], [552, 351], [546, 359], [546, 367], [548, 378],
  [547, 383], [543, 391], [546, 397], [540, 406], [543, 413], [546, 421], [550, 430], [549, 436], [555, 443], [559, 454],
  [562, 464], [568, 474], [568, 486], [566, 494], [559, 503], [551, 513], [548, 522], [540, 531], [533, 541], [531, 551],
  [527, 560], [533, 566], [529, 576], [527, 583], [520, 592], [513, 600], [508, 607], [507, 617], [507, 627], [509, 634],
  [510, 644], [512, 655], [513, 665], [516, 675], [515, 680], [514, 690], [515, 700], [519, 709], [525, 716], [534, 721],
  [541, 721], [548, 722], [555, 722], [563, 724], [569, 722], [567, 729], [560, 735], [551, 741], [548, 748], [544, 754],
  [539, 757], [531, 764], [527, 772], [531, 780], [534, 787], [541, 792], [549, 796], [553, 793], [561, 799], [566, 797],
  [572, 795], [579, 801], [585, 808], [586, 814], [601, 814], [597, 814], [586, 816], [583, 824], [582, 832], [579, 840],
  [572, 844], [566, 846], [564, 855], [567, 863], [568, 873], [569, 880], [566, 888], [564, 894],
];

const standouts: [number, number][] = [
  [606, 330], [649, 343], [631, 332], [620, 327], [601, 318], [560, 339], [546, 359], [546, 367], [548, 378], [543, 391],
  [547, 395], [540, 406], [543, 413], [513, 600], [509, 634], [515, 680], [534, 721], [563, 724], [531, 764], [539, 757], [597, 814], [566, 846],
  [568, 879], [564, 894],
];

const vertices = (() => {
  const out: [number, number][] = [[565, 448]];
  let n = 0;
  let carry = 0;
  for (let i = 1; i < track.length; i += 1) {
    const [x0, y0] = track[i - 1];
    const [x1, y1] = track[i];
    const length = Math.hypot(x1 - x0, y1 - y0);
    let d = carry;
    while (d < length) {
      out.push([x0 + ((x1 - x0) * d) / length, y0 + ((y1 - y0) * d) / length]);
      n += 1;
      d += 0.8 + 0.8 * Math.abs(Math.sin(n * 0.9)) + (n % 11 > 7 ? 2 : 0);
    }
    carry = d - length;
  }
  return out.concat(standouts);
})();

const menus: [string, string, string][] = [
  ['Pro', 'j', 'ect'], ['', 'E', 'dit'], ['', 'V', 'iew'], ['', 'L', 'ayer'], ['', 'S', 'ettings'], ['', 'P', 'lugins'],
  ['Vect', 'o', 'r'], ['', 'R', 'aster'], ['', 'D', 'atabase'], ['', 'W', 'eb'], ['', 'M', 'esh'], ['Pro', 'c', 'essing'], ['', 'H', 'elp'],
];

const vectorMenu: [string, string, string][] = [
  ['', 'G', 'eoprocessing Tools'], ['G', 'e', 'ometry Tools'], ['', 'A', 'nalysis Tools'], ['', 'R', 'esearch Tools'], ['', 'D', 'ata Management Tools'],
];

const geometryMenu: [string, string][] = [
  ['centroids', 'Centroids...'], ['collect', 'Collect Geometries...'], ['densify', 'Densify by Count...'], ['extract', 'Extract Vertices...'],
  ['multipart', 'Multipart to Singleparts...'], ['polyToLine', 'Polygons to Lines...'], ['simplify', 'Simplify...'], ['check', 'Check Validity...'],
  ['delaunay', 'Delaunay Triangulation...'], ['addGeom', 'Add Geometry Attributes...'], ['lineToPoly', 'Lines to Polygons...'], ['voronoi', 'Voronoi Polygons...'],
];

const stats: [string, string][] = [
  ['Count', '662'], ['Sum', '5300'], ['Mean', '8.00604'], ['Median', '4'], ['St dev (pop)', '9.09533'], ['St dev (sample)', '9.10221'],
];

const Accel = ({ parts }: { parts: [string, string, string] }) => (
  <>{parts[0]}<Key>{parts[1]}</Key>{parts[2]}</>
);

const Tool = ({ name, pressed, edge }: { name: string; pressed?: boolean; edge?: boolean }) => (
  <ToolButton aria-label={name} $pressed={pressed} $edge={edge}><Icon name={name} /></ToolButton>
);

const Drop = ({ of, color }: { of: string; color?: string }) => (
  <DropButton aria-label={`${of} options`}><Down color={color} /></DropButton>
);

const DockHead = ({ title, tight }: { title: string; tight?: boolean }) => (
  <DockTitle $tight={tight}>
    <h2>{title}</h2>
    <DockButton aria-label={`Float ${title}`}><Icon name="float" size={12} /></DockButton>
    <DockButton aria-label={`Close ${title}`}><Icon name="close" size={12} /></DockButton>
  </DockTitle>
);

export default function App() {
  return (
    <>
      <GlobalStyle />
      <Frame>
        <TitleBar><Logo /><h1>*Untitled Project — QGIS</h1></TitleBar>
        <MenuBar>
          {menus.map((parts) => {
            const open = parts[0] === 'Vect';
            return (
              <MenuSlot key={parts.join('')}>
                <MenuTitle $open={open}><Accel parts={parts} /></MenuTitle>
                {open && (
                  <Menu role="menu">
                    {vectorMenu.map((item, i) => (
                      <MenuRow key={item.join('')}>
                        <MenuItem role="menuitem" $active={i === 1}>
                          <span><Accel parts={item} /></span>
                          <Right color={i === 1 ? '#a8d0f5' : '#555'} />
                        </MenuItem>
                        {i === 1 && (
                          <SubMenu role="menu">
                            {geometryMenu.map(([icon, label]) => (
                              <MenuItem key={label} role="menuitem" $sub $active={icon === 'extract'}>
                                <Icon name={icon} size={22} /><span>{label}</span>
                              </MenuItem>
                            ))}
                          </SubMenu>
                        )}
                      </MenuRow>
                    ))}
                  </Menu>
                )}
              </MenuSlot>
            );
          })}
        </MenuBar>

        <Toolbar>
          <Grip $first />
          {['newFile', 'open', 'save', 'layout', 'styleEdit', 'styleManager'].map((n) => <Tool key={n} name={n} />)}
          <Grip />
          <Tool name="hand" pressed />
          {['panSelection', 'zoomIn', 'zoomOut', 'zoomFull'].map((n) => <Tool key={n} name={n} />)}
          <Gap $w={264} />
          <Tool name="clock" /><Tool name="refresh" />
          <Grip />
          {['identify', 'table', 'abacus', 'gear'].map((n) => <Tool key={n} name={n} />)}
          <Tool name="sigma" pressed />
          <Tool name="ruler" /><Drop of="Measure" />
          <Tool name="mapTips" />
          <Tool name="action" /><Drop of="Action" color="#aaa" />
          <Tool name="bubble" />
        </Toolbar>
        <Toolbar>
          <Grip $first />
          {['dataSource', 'geopackage', 'shapefile', 'feather', 'chip'].map((n) => <Tool key={n} name={n} />)}
          <Divider />
          <Tool name="virtual" />
          <Divider />
          <Grip />
          {['editsOff', 'pencil', 'saveOff', 'pointsOff'].map((n) => <Tool key={n} name={n} />)}
          <Gap />
          <Grip />
          <Tool name="webSearch" edge />
        </Toolbar>
        <Toolbar $last>
          <Grip $first />
          <Tool name="select" /><Drop of="Select" />
          <Tool name="selectForm" /><Drop of="Select by form" />
          <Tool name="deselect" /><Drop of="Deselect" />
        </Toolbar>

        <Work>
          <Docks>
            <DockHead title="Layers" />
            <LayerTools>
              {['brush', 'addGroup', 'eye', 'filter', 'expressionFilter'].map((n) => (
                <SmallTool key={n} aria-label={n}><Icon name={n} size={16} /></SmallTool>
              ))}
              <SmallTool $slim aria-label="Filter options"><Down /></SmallTool>
              {['expand', 'collapse', 'removeLayer'].map((n) => (
                <SmallTool key={n} aria-label={n}><Icon name={n} size={16} /></SmallTool>
              ))}
            </LayerTools>
            <Tree>
              <TreeRow $current>
                <CheckBox type="checkbox" id="layer-vertices" defaultChecked />
                <label htmlFor="layer-vertices">
                  <svg width="30" height="14" viewBox="0 0 30 14" aria-hidden="true"><circle cx="18" cy="6" r="5.500" fill="#97a26c" stroke="#2f4b55" strokeWidth="1.200" /></svg>
                  Vertices
                </label>
                <Temporary aria-label="Temporary layer"><Icon name="memory" size={20} /></Temporary>
              </TreeRow>
              <TreeRow>
                <CheckBox type="checkbox" id="layer-railroads" defaultChecked />
                <label htmlFor="layer-railroads">
                  <svg width="28" height="14" viewBox="0 0 28 14" aria-hidden="true"><path d="M6 6h22" stroke="#91ad91" strokeWidth="2" /></svg>
                  railroads
                </label>
              </TreeRow>
            </Tree>
            <Tabs>
              <Tab $active $w={82}>Layers</Tab>
              <Tab $w={92}>Browser</Tab>
              <TabRail />
            </Tabs>
            <HSplit />
            <DockHead title="Statistics" tight />
            <LayerPicker>
              <Icon name="points" size={22} />
              <select aria-label="Layer" defaultValue="Vertices"><option>Vertices</option></select>
              <Down />
            </LayerPicker>
            <FieldRow>
              <Combo>
                <b>123</b>
                <input aria-label="Field" defaultValue="vertex_index" />
                <button aria-label="Choose field"><Down /></button>
              </Combo>
              <SquareButton aria-label="Expression"><Epsilon>ε</Epsilon></SquareButton>
            </FieldRow>
            <StatsBox>
              <StatsView>
                <StatsTable>
                  <thead><tr><th>Statistic</th><th>Value</th></tr></thead>
                  <tbody>
                    {stats.map(([name, value]) => <tr key={name}><td>{name}</td><td>{value}</td></tr>)}
                  </tbody>
                </StatsTable>
                <Marker width="215" height="38" viewBox="0 0 215 38" aria-hidden="true">
                  <path d="M0 4Q15 9 38 8 50 4 75 5H165Q185 2 214 1V30Q185 30 165 34H75Q60 36 38 37 15 37 0 32z" fill="#ffe600" />
                </Marker>
              </StatsView>
              <Scroll>
                <button aria-label="Scroll up"><Up /></button>
                <Thumb />
                <button aria-label="Scroll down"><Down /></button>
              </Scroll>
            </StatsBox>
            <StatsFooter>
              <label><CheckBox type="checkbox" />Selected features only</label>
              <SmallTool aria-label="Copy statistics"><Icon name="copy" size={20} /></SmallTool>
              <ToolButton aria-label="Recalculate"><Icon name="refresh" size={22} /></ToolButton>
              <MoreButton aria-label="More">...<Down /></MoreButton>
            </StatsFooter>
          </Docks>
          <VSplit />
          <Canvas>
            <svg width="665" height="781" viewBox="409 201 665 781" role="img" aria-label="Railroad vertices">
              <g fill="#d4b13a" stroke="#2b2b26" strokeWidth="1.100">
                {vertices.map(([x, y], i) => <circle key={i} cx={x} cy={y} r="5.600" />)}
              </g>
            </svg>
          </Canvas>
        </Work>

        <Status>
          <Locator>
            <Icon name="search" size={13} />
            <input aria-label="Locator" placeholder="Type to locate (Ctrl+K)" />
          </Locator>
          <StatusGroup>
            <label htmlFor="coordinate">Coordinate</label>
            <CoordinateBox id="coordinate" defaultValue="935284,5837609" />
            <StatusButton aria-label="Toggle extents"><Icon name="extents" /></StatusButton>
            <label htmlFor="scale">Scale</label>
            <Combo $status>
              <input id="scale" defaultValue="1:5297960" />
              <button aria-label="Choose scale"><Down /></button>
            </Combo>
            <LockButton aria-label="Lock scale"><Icon name="lock" size={22} /></LockButton>
            <span>Magnifier</span>
          </StatusGroup>
        </Status>
      </Frame>
    </>
  );
}
